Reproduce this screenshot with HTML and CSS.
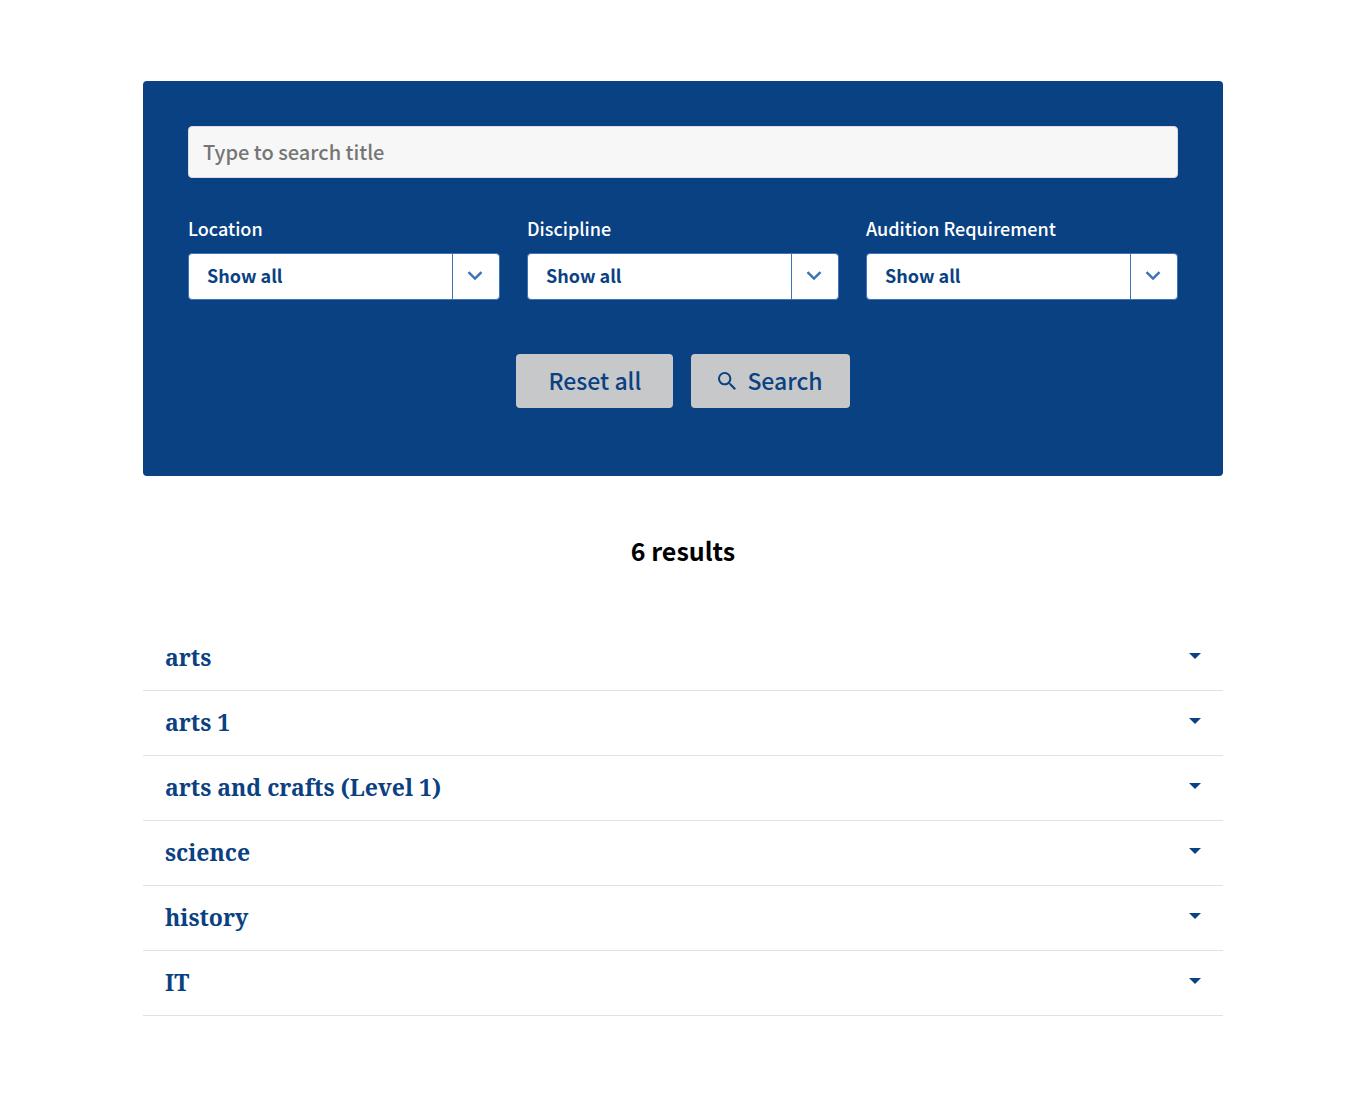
FILE: index.html
```html
<!DOCTYPE html>
<html lang="en">
<head>
<meta charset="utf-8">
<meta name="viewport" content="width=device-width, initial-scale=1">
<title>Course finder</title>
<link rel="stylesheet" href="styles.css">
</head>
<body>
<main class="finder">
  <form class="filters">
    <input class="search-input" type="search" aria-label="Search title" placeholder="Type to search title">
    <div class="filter-row">
      <div class="field">
        <label class="field-label" for="location">Location</label>
        <div class="select-box">
          <select class="select" id="location"><option>Show all</option></select>
          <span class="select-arrow"><svg width="16" height="10" viewBox="0 0 16 10" aria-hidden="true"><path d="M1.5 1.2 8 7.6l6.500-6.400" /></svg></span>
        </div>
      </div>
      <div class="field">
        <label class="field-label" for="discipline">Discipline</label>
        <div class="select-box">
          <select class="select" id="discipline"><option>Show all</option></select>
          <span class="select-arrow"><svg width="16" height="10" viewBox="0 0 16 10" aria-hidden="true"><path d="M1.5 1.2 8 7.6l6.500-6.400" /></svg></span>
        </div>
      </div>
      <div class="field">
        <label class="field-label" for="audition">Audition Requirement</label>
        <div class="select-box">
          <select class="select" id="audition"><option>Show all</option></select>
          <span class="select-arrow"><svg width="16" height="10" viewBox="0 0 16 10" aria-hidden="true"><path d="M1.5 1.2 8 7.6l6.500-6.400" /></svg></span>
        </div>
      </div>
    </div>
    <div class="actions">
      <button class="button" type="reset">Reset all</button>
      <button class="button" type="submit">
        <svg class="search-icon" width="18" height="18" viewBox="3 3 17.500 17.500" aria-hidden="true"><path d="M15.500 14h-.79l-.28-.27A6.471 6.471 0 0 0 16 9.500 6.500 6.500 0 1 0 9.500 16c1.610 0 3.090-.59 4.230-1.570l.27.28v.79l5 4.990L20.490 19l-4.990-5zm-6 0C7.010 14 5 11.990 5 9.500S7.010 5 9.500 5 14 7.010 14 9.500 11.990 14 9.500 14z"/></svg>
        Search
      </button>
    </div>
  </form>

  <h2 class="results-title">6 results</h2>

  <ul class="results">
    <li class="result"><button class="result-toggle" type="button" aria-expanded="false">arts</button></li>
    <li class="result"><button class="result-toggle" type="button" aria-expanded="false">arts 1</button></li>
    <li class="result"><button class="result-toggle" type="button" aria-expanded="false">arts and crafts (Level 1)</button></li>
    <li class="result"><button class="result-toggle" type="button" aria-expanded="false">science</button></li>
    <li class="result"><button class="result-toggle" type="button" aria-expanded="false">history</button></li>
    <li class="result"><button class="result-toggle" type="button" aria-expanded="false">IT</button></li>
  </ul>
</main>
</body>
</html>
```

FILE: styles.css
```css
:root {
  --navy: #0a4182;
  --blue: #3f73b7;
  --sans: "Source Sans Pro", "Noto Sans CJK SC", "Open Sans", sans-serif;
  --serif: "Noto Serif", "Droid Serif", "Liberation Serif", serif;
}

* {
  box-sizing: border-box;
}

body {
  margin: 0;
  background: #fff;
  font-family: var(--sans);
}

.finder {
  max-width: 1080px;
  margin: 0 auto;
  padding: 81px 0;
}

.filters {
  padding: 45px 45px 68px;
  border-radius: 4px;
  background: var(--navy);
}

.search-input {
  display: block;
  width: 100%;
  height: 52px;
  padding: 0 14px 2px;
  border: 1px solid #dcdde0;
  border-radius: 4px;
  background: #f7f7f7;
  color: #222;
  font: 500 20px/28px var(--sans);
  appearance: none;
}

.search-input::placeholder {
  color: #757575;
  opacity: 1;
}

.filter-row {
  display: grid;
  grid-template-columns: repeat(auto-fit, minmax(240px, 1fr));
  gap: 27px;
  margin-top: 37px;
}

.field-label {
  display: block;
  margin-bottom: 11px;
  color: #fff;
  font-size: 18px;
  font-weight: 500;
  line-height: 27px;
}

.select-box {
  position: relative;
}

.select {
  display: block;
  width: 100%;
  height: 47px;
  padding: 0 60px 2px 18px;
  border: 1px solid var(--blue);
  border-radius: 4px;
  background: #fff;
  color: var(--navy);
  font: 700 18px/27px var(--sans);
  appearance: none;
}

.select-arrow {
  position: absolute;
  inset: 1px 1px 1px auto;
  display: flex;
  align-items: center;
  justify-content: center;
  width: 47px;
  padding: 0 2px 2px 0;
  border-left: 1px solid var(--blue);
  pointer-events: none;
}

.select-arrow path {
  fill: none;
  stroke: var(--blue);
  stroke-width: 2.500;
}

.actions {
  display: flex;
  flex-wrap: wrap;
  justify-content: center;
  gap: 18px;
  margin-top: 54px;
}

.button {
  display: flex;
  align-items: center;
  justify-content: center;
  gap: 11px;
  min-width: 157px;
  height: 54px;
  padding: 0 27px 2px;
  border: 0;
  border-radius: 4px;
  background: #c7c8ca;
  color: var(--navy);
  font: 500 23px/34px var(--sans);
}

.search-icon {
  margin-top: 2px;
  fill: currentColor;
}

.results-title {
  margin: 56px 0 57px;
  color: #000;
  font-size: 25px;
  font-weight: 700;
  line-height: 37px;
  text-align: center;
}

.results {
  margin: 0;
  padding: 0;
  list-style: none;
}

.result {
  border-bottom: 1px solid #e1e2e4;
}

.result-toggle {
  display: flex;
  align-items: center;
  justify-content: space-between;
  width: 100%;
  padding: 14px 22px 16px;
  border: 0;
  background: none;
  color: var(--navy);
  font: 700 23px/34px var(--serif);
  text-align: left;
}

.result-toggle::after {
  content: "";
  width: 12px;
  height: 6px;
  margin-bottom: 2px;
  background: currentColor;
  clip-path: polygon(0 0, 100% 0, 50% 100%);
}
```
